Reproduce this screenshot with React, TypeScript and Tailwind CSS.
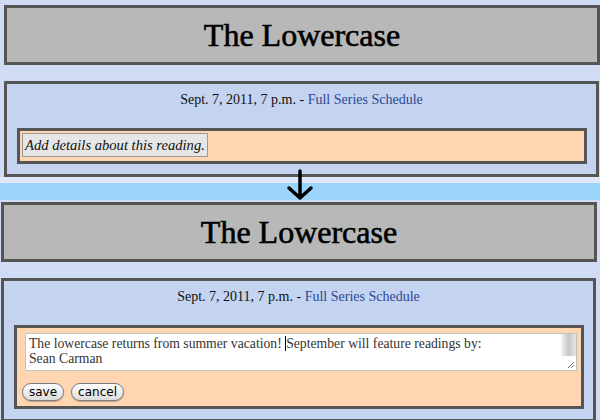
const serif = { fontFamily: '"Liberation Serif", "DejaVu Serif", serif' };

const Header = () => (
  <div className="flex h-[60px] w-[596px] items-center justify-center border-[3px] border-[#555555] bg-[#b8b8b8]">
    <h1 className="text-[32px] leading-none text-black [-webkit-text-stroke:0.6px_#000] [font-family:'Liberation_Serif',serif]">The Lowercase</h1>
  </div>
);

const DateLine = () => (
  <p className="mb-[18px] h-[20px] text-center text-[14px] leading-[20px] text-[#111111] [font-family:'Liberation_Serif',serif]">
    Sept. 7, 2011, 7 p.m. - <a className="text-[#2b4894]">Full Series Schedule</a>
  </p>
);

const Pill = ({ label }: { label: string }) => (
  <button className="h-[18px] rounded-full border border-[#7a7a7a] bg-gradient-to-b from-white to-[#dcdcdc] px-[6px] text-[12px] leading-[15px] text-black shadow-[0_1px_1px_rgba(0,0,0,0.25)] [font-family:'DejaVu_Sans',sans-serif]">
    {label}
  </button>
);

export default function App() {
  return (
    <div className="h-[420px] w-[600px] overflow-hidden bg-[#cfdcf4]" style={serif}>
      {/* before */}
      <div className="h-[177px] pl-[4px] pt-[5px]">
        <Header />
        <div className="mt-[16px] mr-[1px] h-[96px] border-[3px] border-[#555555] bg-[#c4d3f0] px-[10px] pt-[6px]">
          <DateLine />
          <div className="h-[36px] w-[570px] border-[3px] border-[#555555] bg-[#ffd5b2] p-[2px]">
            <span className="inline-block h-[24px] border border-[#9a9a9a] bg-[#e6e6e6] px-[2px] text-[14.6px] italic leading-[22px] text-[#111111]">
              Add details about this reading.
            </span>
          </div>
        </div>
      </div>

      {/* separator */}
      <div className="relative">
        <div className="h-[6px] bg-[#dfe7f8]" />
        <div className="h-[17px] bg-[#9dd4fb]" />
        <svg className="absolute left-[286px] top-[-8px]" width="28" height="32" viewBox="0 0 28 32">
          <path d="M14 2 V29 M3 19 L14 29 L25 19" fill="none" stroke="#000" strokeWidth="3.5" strokeLinecap="round" strokeLinejoin="round" />
        </svg>
      </div>

      {/* after */}
      <div className="pl-[1px] pt-[2px]">
        <Header />
        <div className="mt-[16px] w-[595px] border-[3px] border-[#555555] bg-[#c4d3f0] px-[10px] pt-[6px] pb-[10px]">
          <DateLine />
          <div className="w-[570px] border-[3px] border-[#555555] bg-[#ffd5b2] px-[5px] pt-[5px] pb-[5px]">
            <div className="relative ml-[3px] h-[38px] w-[552px] border border-[#c2c2c2] bg-white px-[3px] pt-[2px] text-[13.7px] leading-[15px] text-[#333333]">
              <div>
                The lowercase returns from summer vacation!{' '}
                <span className="inline-block h-[15px] w-px bg-black align-[-3px]" />
                September will feature readings by:
              </div>
              <div>Sean Carman</div>
              <div className="absolute right-0 top-0 h-[22px] w-[15px] bg-gradient-to-r from-[#f2f2f2] via-[#c8c8c8] to-[#e6e6e6]" />
              <svg className="absolute bottom-[1px] right-[1px]" width="8" height="8" viewBox="0 0 8 8">
                <path d="M7 1 L1 7 M7 4 L4 7" stroke="#777" strokeWidth="1" />
              </svg>
            </div>
            <div className="mt-[12px] flex gap-[7px]">
              <Pill label="save" />
              <Pill label="cancel" />
            </div>
          </div>
        </div>
      </div>
    </div>
  );
}
